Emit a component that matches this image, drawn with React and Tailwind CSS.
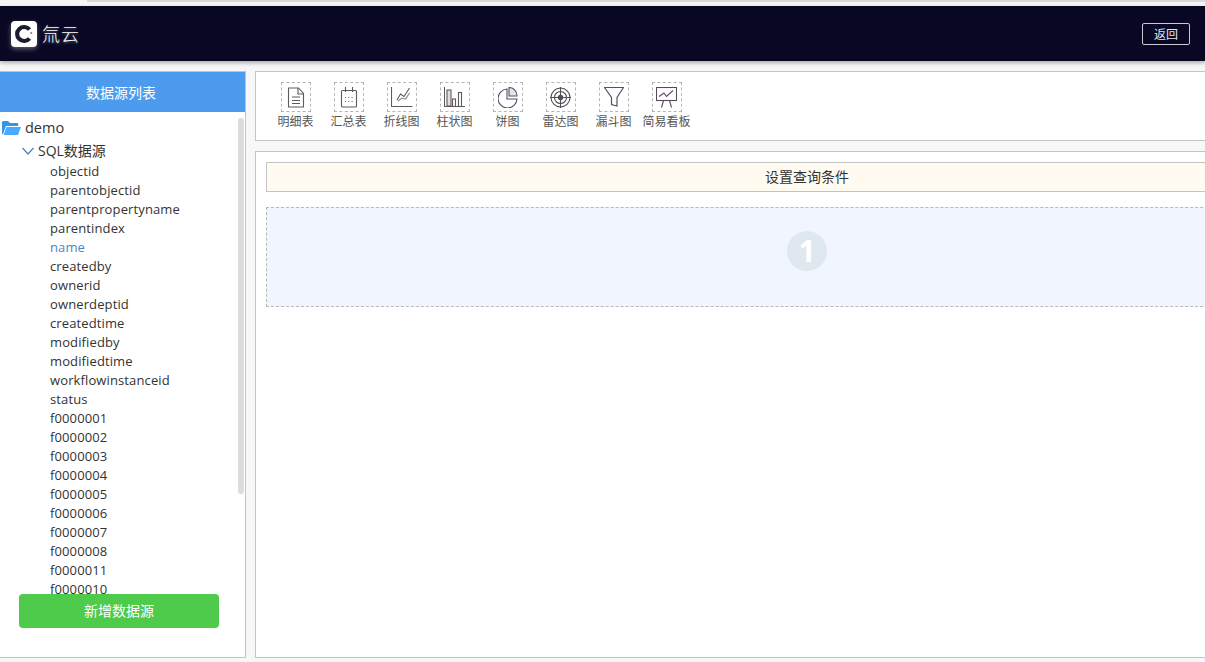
const FONT = 'font-["Open_Sans","Noto_Sans_CJK_SC",sans-serif]';

const fields = [
  'objectid', 'parentobjectid', 'parentpropertyname', 'parentindex', 'name', 'createdby', 'ownerid',
  'ownerdeptid', 'createdtime', 'modifiedby', 'modifiedtime', 'workflowinstanceid', 'status',
  'f0000001', 'f0000002', 'f0000003', 'f0000004', 'f0000005', 'f0000006', 'f0000007', 'f0000008',
  'f0000011', 'f0000010',
];

const DetailIcon = () => (
  <svg width="18" height="21" viewBox="0 0 18 21" fill="none" stroke="#5f5a5a" strokeWidth="1.1">
    <path d="M1.500 1h10l5 5.500V20h-15z" />
    <path d="M11 1v6h5.500M5 10h8M5 13.500h8M5 16.500h8" />
  </svg>
);

const SummaryIcon = () => (
  <svg width="18" height="21" viewBox="0 0 18 21" fill="none" stroke="#5f5a60" strokeWidth="1.1">
    <rect x="1.500" y="3.500" width="15" height="16.500" rx="1" />
    <path d="M5.500 0v5M12.500 0v5" />
    <path d="M5 10.500h1.500M8.300 10.500h1.500M11.600 10.500h1.500M5 14.500h1.500M8.300 14.500h1.500M11.600 14.500h1.500" strokeDasharray="1 .6" />
  </svg>
);

const LineIcon = () => (
  <svg width="22" height="21" viewBox="0 0 22 21" fill="none" stroke="#5f5a60" strokeWidth="1.1">
    <path d="M.5 0v19.500h21" />
    <path d="M6 13l3.500-6 3.500 2.500L18.500 1" />
    <path d="M7 14l4-3 3.500 1 4-6" stroke="#8a8a8a" />
  </svg>
);

const BarIcon = () => (
  <svg width="21" height="21" viewBox="0 0 21 21" fill="none" stroke="#5f5a60" strokeWidth="1.1">
    <path d="M.5 0v19.500h20.500" />
    <rect x="3" y="3" width="4" height="16" fill="#ecdcd8" />
    <rect x="8.500" y="12" width="3" height="7.500" />
    <rect x="14.500" y="5.500" width="3" height="14" />
  </svg>
);

const PieIcon = () => (
  <svg width="20" height="21" viewBox="0 0 20 21" fill="none" stroke="#50506a" strokeWidth="1.1">
    <path d="M9 2a9.500 9.500 0 1 0 10 10h-10z" />
    <path d="M11 .5a8 8 0 0 1 8 8.500h-8z" fill="#e4e4e8" />
  </svg>
);

const RadarIcon = () => (
  <svg width="21" height="21" viewBox="0 0 21 21" fill="none" stroke="#50505a" strokeWidth="1.1">
    <circle cx="10.500" cy="10.500" r="9.500" />
    <circle cx="10.500" cy="10.500" r="6" />
    <circle cx="10.500" cy="10.500" r="2.200" fill="#50505a" />
    <path d="M10.500 0v21M0 10.500h21" />
  </svg>
);

const FunnelIcon = () => (
  <svg width="20" height="20" viewBox="0 0 20 20" fill="none" stroke="#50506a" strokeWidth="1.200">
    <path d="M.5 .5h19l-6.500 10v8.500l-5.500-1.500v-7z" />
  </svg>
);

const BoardIcon = () => (
  <svg width="21" height="21" viewBox="0 0 21 21" fill="none" stroke="#5a4a60" strokeWidth="1.100">
    <rect x=".5" y=".5" width="20" height="13" />
    <path d="M3 9.500l5-3.500 2.500 3.500L17 3.500" />
    <path d="M5.500 20.500l2-7M15.500 20.500l-2-7" />
  </svg>
);

const tools = [
  { label: '明细表', icon: <DetailIcon /> },
  { label: '汇总表', icon: <SummaryIcon /> },
  { label: '折线图', icon: <LineIcon /> },
  { label: '柱状图', icon: <BarIcon /> },
  { label: '饼图', icon: <PieIcon /> },
  { label: '雷达图', icon: <RadarIcon /> },
  { label: '漏斗图', icon: <FunnelIcon /> },
  { label: '简易看板', icon: <BoardIcon /> },
];

const App = () => {
  return (
    <div className={`w-[1205px] h-[662px] overflow-hidden bg-[#f7f7f7] ${FONT}`}>
      <div className="h-[6px] bg-[#f5f5f5] flex">
        <div className="w-[87px]" />
        <div className="flex-1 h-[2px] bg-[#d9d9d9]" />
      </div>

      <header className="h-[55px] bg-[#080824] shadow-[0_2px_4px_rgba(0,0,0,0.3)] flex items-center justify-between pl-[11px] pr-[15px]">
        <div className="flex items-center gap-[5px]">
          <div className="w-[26px] h-[26px] rounded-[4px] bg-white shadow-[0_2px_5px_rgba(255,255,255,0.35)] flex items-center justify-center">
            <svg width="22" height="22" viewBox="0 0 22 22" fill="none">
              <path d="M16.500 6.500a7 7 0 1 0 0 9" stroke="#1c1c30" strokeWidth="4.200" />
              <path d="M17.500 9.500l1.500 1" stroke="#55556a" strokeWidth="1.500" />
            </svg>
          </div>
          <span className="text-[18px] leading-none font-light text-white tracking-[1px] [text-shadow:0_1px_3px_rgba(255,255,255,0.4)]">
            氚云
          </span>
        </div>
        <button className="w-[48px] h-[22px] pt-[2px] border border-[#c9c9d0] rounded-[2px] text-[12px] leading-none text-[#e4e4e8]">
          返回
        </button>
      </header>

      <div className="flex mt-[10px] h-[587px]">
        <aside className="w-[246px] shrink-0 relative bg-white border-r border-b border-t border-[#c4c4c4] flex flex-col">
          <div className="h-[40px] shrink-0 pr-[3px] bg-[#4c9bee] text-white text-[14px] flex items-center justify-center">
            数据源列表
          </div>
          <div className="flex-1 overflow-hidden relative">
            <div className="flex items-center h-[31px] pl-[2px] gap-[4px] text-[14.500px] text-[#333]">
              <svg width="19" height="16" viewBox="0 0 19 16">
                <path d="M0 2.500C0 1.500.8 1 1.500 1H6l2 2h7c.8 0 1.200.5 1.200 1.200V6H4L1 14H0z" fill="#2f95f2" />
                <path d="M4.500 7H19l-3 8H1.500z" fill="#4aaaff" />
              </svg>
              demo
            </div>
            <div className="flex items-center h-[16px] pl-[22px] gap-[4px] text-[14px] leading-none text-[#333]">
              <svg width="12" height="8" viewBox="0 0 12 8" fill="none" stroke="#4c80c0" strokeWidth="1.200">
                <path d="M.5 1l5.500 6 5.500-6" />
              </svg>
              <span>SQL数据源</span>
            </div>
            <ul className="pl-[50px] pt-[3px] text-[13px] tracking-[0.12px]">
              {fields.map((field) => (
                <li key={field} className={`h-[19px] leading-[19px] ${field === 'name' ? 'text-[#4a86c8]' : 'text-[#333]'}`}>
                  {field}
                </li>
              ))}
            </ul>
            <div className="absolute right-[1px] top-[6px] w-[6px] h-[376px] rounded-[3px] bg-[#dcdcdc]" />
          </div>
          <button className="absolute left-[19px] bottom-[29px] w-[200px] h-[34px] pb-[2px] rounded-[4px] bg-[#4ecb4a] text-white text-[14px]">
            新增数据源
          </button>
        </aside>

        <main className="w-[1104px] shrink-0 ml-[9px] flex flex-col">
          <div className="h-[70px] shrink-0 bg-white border border-[#c4c4c4] flex pl-[13px] pt-[10px]">
            {tools.map((tool) => (
              <div key={tool.label} className="w-[53px] flex flex-col items-center text-[12px] text-[#555]">
                <div className="w-[30px] h-[30px] border border-dashed border-[#b5b5b5] flex items-center justify-center">
                  {tool.icon}
                </div>
                <span className="leading-[16px] mt-[2px] whitespace-nowrap">{tool.label}</span>
              </div>
            ))}
          </div>
          <div className="flex-1 mt-[10px] bg-white border border-[#c4c4c4] px-[10px] pt-[10px]">
            <div className="h-[30px] pb-[2px] bg-[#fffbf0] border border-[#c4c4c4] flex items-center justify-center text-[14px] text-[#333]">
              设置查询条件
            </div>
            <div className="h-[100px] mt-[15px] pt-[23px] bg-[#f1f6fe] border border-dashed border-[#b9b9b9] flex justify-center">
              <div className="w-[40px] h-[40px] rounded-full bg-[#dfe8ef] flex items-center justify-center text-white text-[30px] font-bold leading-none">
                1
              </div>
            </div>
          </div>
        </main>
      </div>
    </div>
  );
};

export default App;
